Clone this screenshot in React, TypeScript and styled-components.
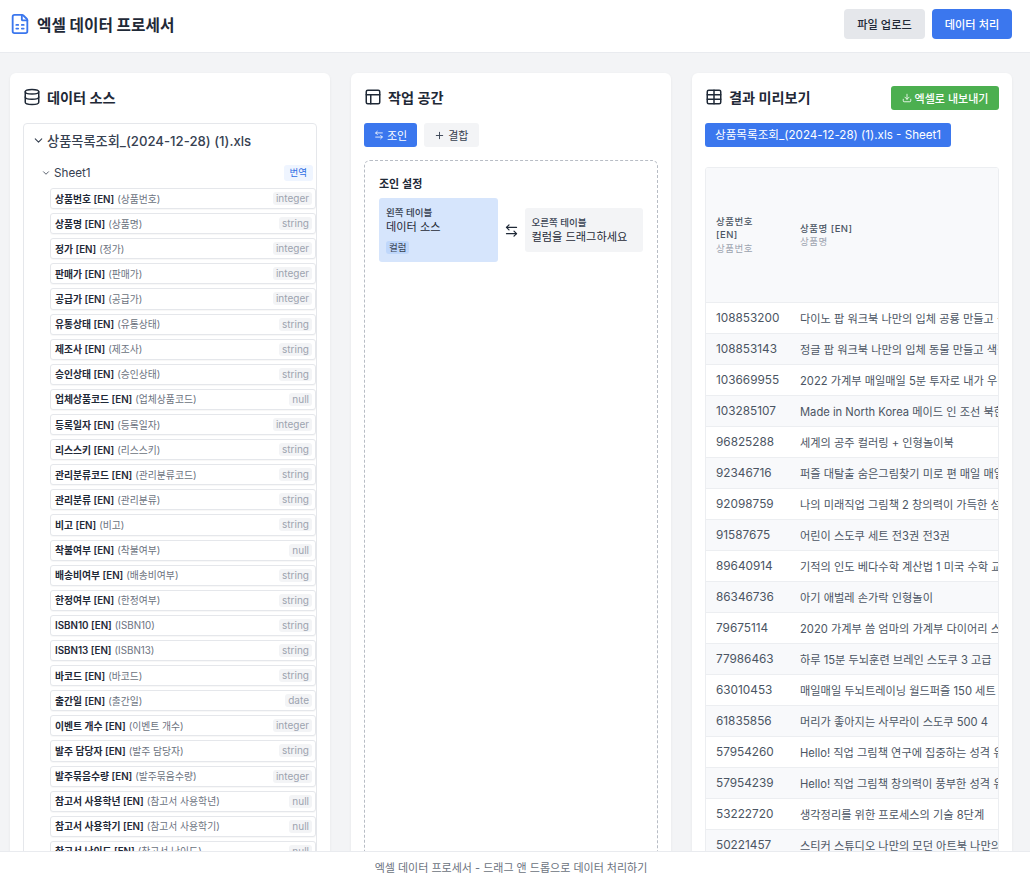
import React from 'react';
import styled, { createGlobalStyle } from 'styled-components';
import {
  FileSpreadsheet,
  Database,
  Layout,
  Table,
  ChevronDown,
  ArrowLeftRight,
  Plus,
  Download,
} from 'lucide-react';

const GlobalStyle = createGlobalStyle`
  html, body {
    margin: 0;
    padding: 0;
    height: 100%;
    overflow: hidden;
  }
  * {
    box-sizing: border-box;
  }
  body {
    font-family: Inter, "Noto Sans CJK KR", "Noto Sans", sans-serif;
    color: #1f2937;
    background: #f3f4f6;
  }
`;

const Page = styled.div`
  height: 881px;
  display: flex;
  flex-direction: column;
  overflow: hidden;
`;

const Header = styled.header`
  height: 53px;
  flex: none;
  background: #fff;
  border-bottom: 1px solid #e9ebef;
  display: flex;
  align-items: center;
  justify-content: space-between;
  padding: 0 18px 4px 9px;
`;

const Brand = styled.div`
  display: flex;
  align-items: center;
  gap: 6px;
  color: #3b77ee;
`;

const BrandName = styled.h1`
  margin: 0;
  font-size: 15.7px;
  font-weight: 700;
  color: #1f2937;
`;

const HeaderActions = styled.div`
  display: flex;
  gap: 7px;
`;

const HeaderButton = styled.button<{ $primary?: boolean }>`
  height: 30px;
  width: ${(p) => (p.$primary ? '80px' : '81px')};
  border: 0;
  border-radius: 4px;
  font: inherit;
  font-size: 11.2px;
  font-weight: 500;
  background: ${(p) => (p.$primary ? '#3b77ee' : '#e5e7eb')};
  color: ${(p) => (p.$primary ? '#fff' : '#1f2937')};
`;

const Main = styled.main`
  flex: 1;
  min-height: 0;
  display: grid;
  grid-template-columns: 320px 320px 320px;
  column-gap: 21px;
  padding: 20px 18px 0 10px;
  overflow: hidden;
`;

const Card = styled.section`
  background: #fff;
  border-radius: 6px;
  box-shadow: 0 1px 3px rgba(0, 0, 0, 0.06);
  padding: 13px 13px 0 13px;
  min-width: 0;
  overflow: hidden;
`;

const CardHeader = styled.div`
  height: 24px;
  display: flex;
  align-items: center;
  justify-content: space-between;
  margin-bottom: 13px;
`;

const CardTitle = styled.h2`
  margin: 0;
  padding-bottom: 2px;
  display: flex;
  align-items: center;
  gap: 6px;
  font-size: 14.2px;
  font-weight: 700;
  color: #1f2937;
`;

const ExportButton = styled.button`
  height: 24px;
  width: 108px;
  border: 0;
  border-radius: 3px;
  background: #4caf50;
  color: #fff;
  font: inherit;
  font-size: 11px;
  font-weight: 500;
  display: flex;
  align-items: center;
  justify-content: center;
  gap: 3px;
`;

const TreeBox = styled.div`
  border: 1px solid #e5e7eb;
  border-radius: 4px;
  padding: 5px 0 0 8px;
  height: 900px;
  overflow: hidden;
`;

const FileRow = styled.div`
  height: 22px;
  display: flex;
  align-items: center;
  gap: 2px;
  font-size: 13.2px;
  font-weight: 500;
  color: #374151;
`;

const SheetRow = styled.div`
  margin-top: 11px;
  height: 21px;
  display: flex;
  align-items: center;
  gap: 3px;
  padding: 0 3px 0 9px;
  font-size: 11.7px;
  color: #374151;
`;

const SheetName = styled.span`
  flex: 1;
`;

const TranslateTag = styled.span`
  padding: 1px 6px;
  border-radius: 3px;
  background: #eff5ff;
  color: #2f6fe4;
  font-size: 9.5px;
  line-height: 14px;
`;

const FieldList = styled.div`
  margin: 5px 0 0 18px;
  display: flex;
  flex-direction: column;
  gap: 4px;
`;

const FieldRow = styled.div`
  height: 21.12px;
  flex: none;
  border: 1px solid #e5e7eb;
  border-radius: 3px;
  background: #fff;
  box-shadow: 0 1px 1px rgba(0, 0, 0, 0.03);
  display: flex;
  align-items: center;
  justify-content: space-between;
  padding: 0 3px 0 4px;
  font-size: 9.8px;
`;

const FieldName = styled.span`
  font-weight: 600;
  color: #1f2937;
  white-space: nowrap;
`;

const FieldOriginal = styled.span`
  margin-left: 3px;
  font-weight: 400;
  color: #6b7280;
`;

const FieldType = styled.span`
  padding: 0 3px;
  border-radius: 3px;
  background: #f3f4f6;
  color: #9ca3af;
  line-height: 13px;
  font-size: 10px;
`;

const ModeTabs = styled.div`
  display: flex;
  gap: 7px;
  margin-bottom: 13px;
`;

const ModeTab = styled.button<{ $active?: boolean }>`
  height: 24px;
  padding: 0 10px;
  border: 0;
  border-radius: 3px;
  background: ${(p) => (p.$active ? '#3b77ee' : '#f3f4f6')};
  color: ${(p) => (p.$active ? '#fff' : '#374151')};
  font: inherit;
  font-size: 11px;
  font-weight: 400;
  display: flex;
  align-items: center;
  gap: 3px;
`;

const DropArea = styled.div`
  border: 1px dashed #b8bdc5;
  border-radius: 6px;
  height: 800px;
  padding: 15px 14px 0;
`;

const JoinTitle = styled.h3`
  margin: 0 0 6px;
  font-size: 11px;
  font-weight: 600;
  line-height: 16px;
  color: #1f2937;
`;

const JoinRow = styled.div`
  display: flex;
  align-items: center;
`;

const JoinSlot = styled.div<{ $filled?: boolean }>`
  flex: 1;
  border-radius: 3px;
  padding: 8px 7px 7px;
  background: ${(p) => (p.$filled ? '#d6e5fc' : '#f3f4f6')};
`;

const SlotLabel = styled.div`
  font-size: 9.5px;
  font-weight: 500;
  line-height: 14px;
  color: #374151;
`;

const SlotValue = styled.div`
  font-size: 11.2px;
  line-height: 15px;
  color: #1f2937;
`;

const SlotChip = styled.span`
  display: inline-block;
  margin-top: 5px;
  padding: 0 3px;
  border-radius: 3px;
  background: #bfd7fb;
  font-size: 9.5px;
  line-height: 13px;
  color: #374151;
`;

const JoinIcon = styled.div`
  width: 27px;
  flex: none;
  display: flex;
  justify-content: center;
  color: #1f2937;
`;

const SheetTab = styled.div`
  display: inline-block;
  height: 24px;
  line-height: 24px;
  padding: 0 10px;
  border-radius: 3px;
  background: #3b77ee;
  color: #fff;
  font-size: 11.6px;
`;

const TableWrap = styled.div`
  margin-top: 20px;
  border: 1px solid #eceef1;
  border-radius: 3px 3px 0 0;
  overflow: hidden;
`;

const HeadRow = styled.div`
  height: 134px;
  background: #f8f9fb;
  display: flex;
  align-items: center;
`;

const HeadCell = styled.div`
  font-size: 9.5px;
  font-weight: 500;
  line-height: 13.5px;
  letter-spacing: 0.475px;
  color: #4b5563;
`;

const HeadId = styled(HeadCell)`
  width: 94px;
  flex: none;
  padding: 0 30px 0 10px;
`;

const HeadName = styled(HeadCell)`
  flex: 1;
`;

const HeadSub = styled.div`
  font-weight: 400;
  color: #9ca3af;
`;

const DataRow = styled.div`
  height: 31px;
  border-top: 1px solid #eceef1;
  display: flex;
  align-items: center;
  padding-bottom: 1px;
  color: #4b5563;
  white-space: nowrap;
  &:nth-child(odd) {
    background: #f8f9fb;
  }
`;

const CellId = styled.div`
  width: 94px;
  flex: none;
  padding-left: 10px;
  font-size: 11.8px;
`;

const CellName = styled.div`
  font-size: 11.2px;
`;

const Footer = styled.footer`
  position: absolute;
  left: 0;
  right: 0;
  bottom: 0;
  height: 30px;
  padding-right: 8px;
  background: #fff;
  border-top: 1px solid #e9ebef;
  display: flex;
  align-items: center;
  justify-content: center;
  font-size: 11px;
  color: #6b7280;
`;

const fields: [string, string][] = [
  ['상품번호', 'integer'],
  ['상품명', 'string'],
  ['정가', 'integer'],
  ['판매가', 'integer'],
  ['공급가', 'integer'],
  ['유통상태', 'string'],
  ['제조사', 'string'],
  ['승인상태', 'string'],
  ['업체상품코드', 'null'],
  ['등록일자', 'integer'],
  ['리스스키', 'string'],
  ['관리분류코드', 'string'],
  ['관리분류', 'string'],
  ['비고', 'string'],
  ['착불여부', 'null'],
  ['배송비여부', 'string'],
  ['한정여부', 'string'],
  ['ISBN10', 'string'],
  ['ISBN13', 'string'],
  ['바코드', 'string'],
  ['출간일', 'date'],
  ['이벤트 개수', 'integer'],
  ['발주 담당자', 'string'],
  ['발주묶음수량', 'integer'],
  ['참고서 사용학년', 'null'],
  ['참고서 사용학기', 'null'],
  ['참고서 난이도', 'null'],
];

const rows: [string, string][] = [
  ['108853200', '다이노 팝 워크북 나만의 입체 공룡 만들고 색칠하기'],
  ['108853143', '정글 팝 워크북 나만의 입체 동물 만들고 색칠하기'],
  ['103669955', '2022 가계부 매일매일 5분 투자로 내가 우리집 경제'],
  ['103285107', 'Made in North Korea 메이드 인 조선 북한 그래픽'],
  ['96825288', '세계의 공주 컬러링 + 인형놀이북'],
  ['92346716', '퍼즐 대탈출 숨은그림찾기 미로 편 매일 매일 두뇌'],
  ['92098759', '나의 미래직업 그림책 2 창의력이 가득한 성격 유형'],
  ['91587675', '어린이 스도쿠 세트 전3권 전3권'],
  ['89640914', '기적의 인도 베다수학 계산법 1 미국 수학 교과서'],
  ['86346736', '아기 애벌레 손가락 인형놀이'],
  ['79675114', '2020 가계부 씀 엄마의 가계부 다이어리 스케줄러'],
  ['77986463', '하루 15분 두뇌훈련 브레인 스도쿠 3 고급'],
  ['63010453', '매일매일 두뇌트레이닝 월드퍼즐 150 세트 전2권'],
  ['61835856', '머리가 좋아지는 사무라이 스도쿠 500 4'],
  ['57954260', 'Hello! 직업 그림책 연구에 집중하는 성격 유형 편'],
  ['57954239', 'Hello! 직업 그림책 창의력이 풍부한 성격 유형 편'],
  ['53222720', '생각정리를 위한 프로세스의 기술 8단계'],
  ['50221457', '스티커 스튜디오 나만의 모던 아트북 나만의 스티커'],
];

export default function App() {
  return (
    <Page>
      <GlobalStyle />
      <Header>
        <Brand>
          <FileSpreadsheet size={22} strokeWidth={2} />
          <BrandName>엑셀 데이터 프로세서</BrandName>
        </Brand>
        <HeaderActions>
          <HeaderButton>파일 업로드</HeaderButton>
          <HeaderButton $primary>데이터 처리</HeaderButton>
        </HeaderActions>
      </Header>
      <Main>
        <Card>
          <CardHeader>
            <CardTitle>
              <Database size={18} />
              데이터 소스
            </CardTitle>
          </CardHeader>
          <TreeBox>
            <FileRow>
              <ChevronDown size={13} />
              상품목록조회_(2024-12-28) (1).xls
            </FileRow>
            <SheetRow>
              <ChevronDown size={10} />
              <SheetName>Sheet1</SheetName>
              <TranslateTag>번역</TranslateTag>
            </SheetRow>
            <FieldList>
              {fields.map(([name, type]) => (
                <FieldRow key={name}>
                  <FieldName>
                    {name} [EN]
                    <FieldOriginal>({name})</FieldOriginal>
                  </FieldName>
                  <FieldType>{type}</FieldType>
                </FieldRow>
              ))}
            </FieldList>
          </TreeBox>
        </Card>
        <Card>
          <CardHeader>
            <CardTitle>
              <Layout size={18} />
              작업 공간
            </CardTitle>
          </CardHeader>
          <ModeTabs>
            <ModeTab $active>
              <ArrowLeftRight size={10} />
              조인
            </ModeTab>
            <ModeTab>
              <Plus size={11} />
              결합
            </ModeTab>
          </ModeTabs>
          <DropArea>
            <JoinTitle>조인 설정</JoinTitle>
            <JoinRow>
              <JoinSlot $filled>
                <SlotLabel>왼쪽 테이블</SlotLabel>
                <SlotValue>데이터 소스</SlotValue>
                <SlotChip>컬럼</SlotChip>
              </JoinSlot>
              <JoinIcon>
                <ArrowLeftRight size={15} />
              </JoinIcon>
              <JoinSlot>
                <SlotLabel>오른쪽 테이블</SlotLabel>
                <SlotValue>컬럼을 드래그하세요</SlotValue>
              </JoinSlot>
            </JoinRow>
          </DropArea>
        </Card>
        <Card>
          <CardHeader>
            <CardTitle>
              <Table size={18} />
              결과 미리보기
            </CardTitle>
            <ExportButton>
              <Download size={10} />
              엑셀로 내보내기
            </ExportButton>
          </CardHeader>
          <SheetTab>상품목록조회_(2024-12-28) (1).xls - Sheet1</SheetTab>
          <TableWrap>
            <HeadRow>
              <HeadId>
                상품번호 [EN]
                <HeadSub>상품번호</HeadSub>
              </HeadId>
              <HeadName>
                상품명 [EN]
                <HeadSub>상품명</HeadSub>
              </HeadName>
            </HeadRow>
            {rows.map(([id, name]) => (
              <DataRow key={id}>
                <CellId>{id}</CellId>
                <CellName>{name}</CellName>
              </DataRow>
            ))}
          </TableWrap>
        </Card>
      </Main>
      <Footer>엑셀 데이터 프로세서 - 드래그 앤 드롭으로 데이터 처리하기</Footer>
    </Page>
  );
}
